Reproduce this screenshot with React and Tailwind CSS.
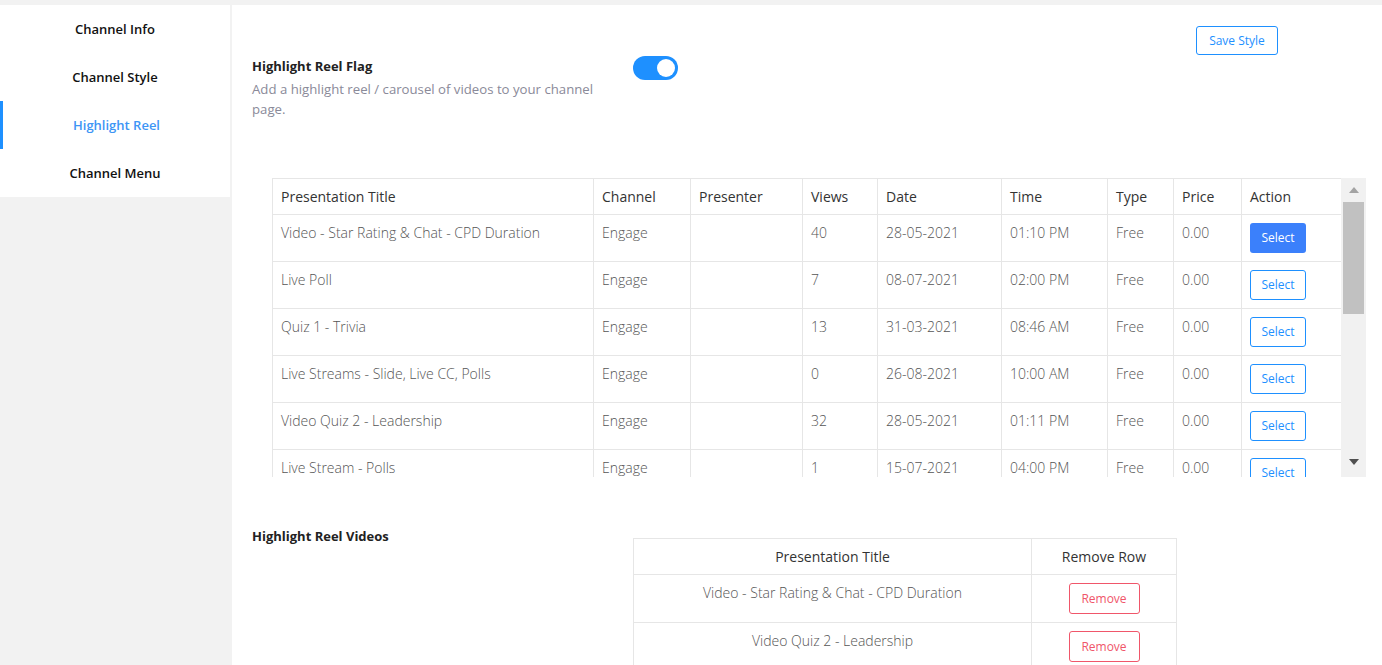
import React from "react";

const rows = [
  ["Video - Star Rating & Chat - CPD Duration", "Engage", "", "40", "28-05-2021", "01:10 PM", "Free", "0.00", true],
  ["Live Poll", "Engage", "", "7", "08-07-2021", "02:00 PM", "Free", "0.00", false],
  ["Quiz 1 - Trivia", "Engage", "", "13", "31-03-2021", "08:46 AM", "Free", "0.00", false],
  ["Live Streams - Slide, Live CC, Polls", "Engage", "", "0", "26-08-2021", "10:00 AM", "Free", "0.00", false],
  ["Video Quiz 2 - Leadership", "Engage", "", "32", "28-05-2021", "01:11 PM", "Free", "0.00", false],
  ["Live Stream - Polls", "Engage", "", "1", "15-07-2021", "04:00 PM", "Free", "0.00", false],
  ["Webinar - Q&A", "Engage", "", "5", "02-06-2021", "11:00 AM", "Free", "0.00", false],
];

const headers = ["Presentation Title", "Channel", "Presenter", "Views", "Date", "Time", "Type", "Price", "Action"];
const widths = [321, 97, 112, 75, 124, 106, 66, 68, 100];

function Sidebar() {
  const items = ["Channel Info", "Channel Style", "Highlight Reel", "Channel Menu"];
  return (
    <div className="w-[230px] shrink-0 self-start bg-white">
      {items.map((it) => {
        const active = it === "Highlight Reel";
        return (
          <div key={it} className="relative flex h-[48px] items-center justify-center pt-[2px]">
            {active && <div className="absolute left-0 top-0 h-full w-[3px] bg-[#1e90ff]" />}
            <span
              className={
                "text-[13px] font-semibold " + (active ? "text-[#3d95f5] pl-[3px]" : "text-[#111]")
              }
            >
              {it}
            </span>
          </div>
        );
      })}
    </div>
  );
}

function Toggle() {
  return (
    <div className="flex h-[24px] w-[45px] items-center justify-end rounded-full bg-[#1e90ff] pr-[3px]">
      <div className="h-[18px] w-[18px] rounded-full bg-white" />
    </div>
  );
}

function Scrollbar() {
  return (
    <div className="flex w-[25px] shrink-0 flex-col items-center bg-[#f1f1f1]">
      <div className="flex h-[24px] w-full items-center justify-center">
        <div className="h-0 w-0 border-x-[5px] border-b-[6px] border-x-transparent border-b-[#a3a3a3]" />
      </div>
      <div className="h-[112px] w-[21px] bg-[#c1c1c1]" />
      <div className="flex-1" />
      <div className="flex h-[30px] w-full items-center justify-center">
        <div className="h-0 w-0 border-x-[5px] border-t-[6px] border-x-transparent border-t-[#505050]" />
      </div>
    </div>
  );
}

function MainTable() {
  return (
    <div className="ml-[20px] flex h-[299px] w-[1094px] overflow-hidden">
      <div className="h-full flex-1 overflow-hidden">
        <table className="w-[1069px] table-fixed border-collapse">
          <colgroup>
            {widths.map((w, i) => (
              <col key={i} style={{ width: w }} />
            ))}
          </colgroup>
          <thead>
            <tr className="h-[36px]">
              {headers.map((h) => (
                <th
                  key={h}
                  className="border border-[#e6e6e6] px-[8px] text-left align-middle text-[14px] font-normal text-[#333]"
                >
                  {h}
                </th>
              ))}
            </tr>
          </thead>
          <tbody>
            {rows.map((r, i) => (
              <tr key={i} className="h-[47px]">
                {r.slice(0, 8).map((c, j) => (
                  <td
                    key={j}
                    className="border border-[#e6e6e6] px-[8px] pt-[8px] align-top text-[14px] font-light leading-[20px] text-[#555]"
                  >
                    {c}
                  </td>
                ))}
                <td className="border border-[#e6e6e6] px-[8px] pt-[8px] align-top">
                  <button
                    className={
                      "h-[30px] w-[56px] rounded-[3px] text-[12px] " +
                      (r[8]
                        ? "bg-[#3b80fb] text-white"
                        : "border border-[#1e90ff] bg-white text-[#1e90ff]")
                    }
                  >
                    Select
                  </button>
                </td>
              </tr>
            ))}
          </tbody>
        </table>
      </div>
      <Scrollbar />
    </div>
  );
}

function ReelTable() {
  const items = ["Video - Star Rating & Chat - CPD Duration", "Video Quiz 2 - Leadership"];
  return (
    <table className="mt-[12px] w-[543px] table-fixed border-collapse">
      <colgroup>
        <col style={{ width: 398 }} />
        <col style={{ width: 145 }} />
      </colgroup>
      <thead>
        <tr className="h-[36px]">
          <th className="border border-[#e6e6e6] text-center text-[14px] font-normal text-[#333]">
            Presentation Title
          </th>
          <th className="border border-[#e6e6e6] text-center text-[14px] font-normal text-[#333]">
            Remove Row
          </th>
        </tr>
      </thead>
      <tbody>
        {items.map((t) => (
          <tr key={t} className="h-[48px]">
            <td className="border border-[#e6e6e6] pt-[8px] text-center align-top text-[14px] font-light leading-[20px] text-[#555]">
              {t}
            </td>
            <td className="border border-[#e6e6e6] pt-[8px] text-center align-top">
              <button className="h-[31px] w-[71px] rounded-[3px] border border-[#f0566a] bg-white text-[12px] text-[#f0566a]">
                Remove
              </button>
            </td>
          </tr>
        ))}
      </tbody>
    </table>
  );
}

export default function App() {
  return (
    <div
      className="flex h-[665px] overflow-hidden bg-[#f2f2f2] pt-[5px]"
      style={{ fontFamily: '"Open Sans", "Noto Sans", sans-serif' }}
    >
      <Sidebar />
      <div className="ml-[2px] flex-1 bg-white pl-[20px] pt-[21px]">
        <div className="flex justify-end pr-[104px]">
          <button className="h-[29px] w-[82px] rounded-[3px] border border-[#1e90ff] text-[12px] text-[#1e90ff]">
            Save Style
          </button>
        </div>
        <div className="mt-px flex">
          <div className="w-[381px] pr-[36px]">
            <div className="text-[13px] font-bold leading-[20px] text-[#222]">Highlight Reel Flag</div>
            <div className="mt-[3px] text-[13.2px] leading-[20px] text-[#8a8a99]">
              Add a highlight reel / carousel of videos to your channel page.
            </div>
          </div>
          <Toggle />
        </div>
        <div className="mt-[59px]">
          <MainTable />
        </div>
        <div className="mt-[49px] flex">
          <div className="w-[381px] text-[13px] font-bold leading-[20px] text-[#222]">
            Highlight Reel Videos
          </div>
          <ReelTable />
        </div>
      </div>
    </div>
  );
}
